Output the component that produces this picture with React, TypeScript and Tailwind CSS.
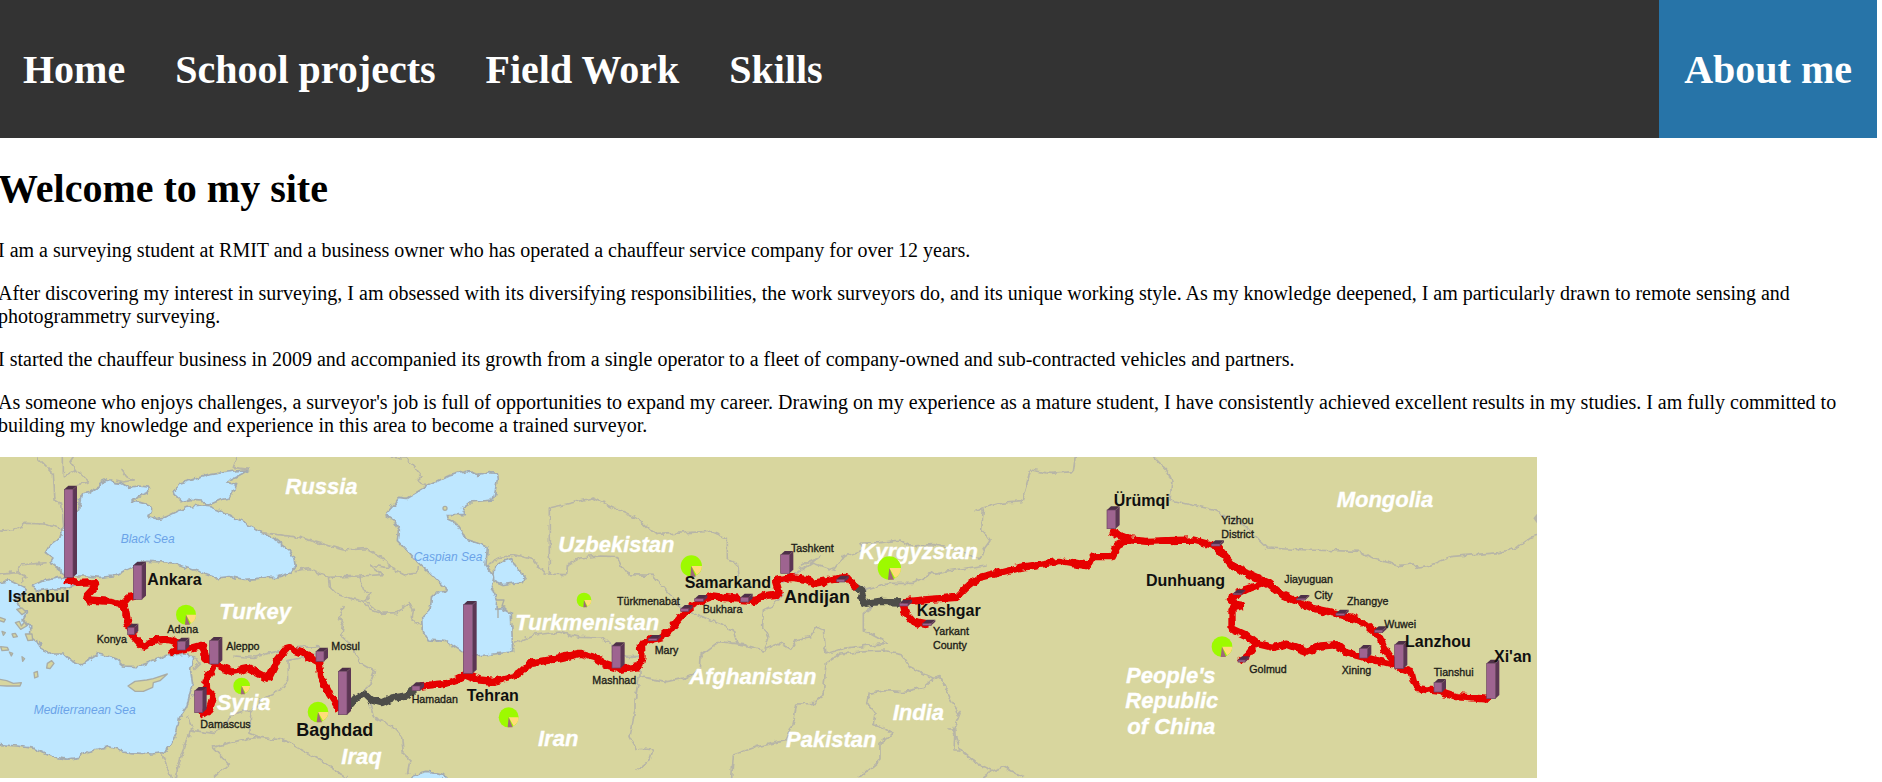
import React from "react";

type Point = [number, number];

const navLinks = ["Home", "School projects", "Field Work", "Skills"];

const paragraphs = [
  "I am a surveying student at RMIT and a business owner who has operated a chauffeur service company for over 12 years.",
  "After discovering my interest in surveying, I am obsessed with its diversifying responsibilities, the work surveyors do, and its unique working style. As my knowledge deepened, I am particularly drawn to remote sensing and photogrammetry surveying.",
  "I started the chauffeur business in 2009 and accompanied its growth from a single operator to a fleet of company-owned and sub-contracted vehicles and partners.",
  "As someone who enjoys challenges, a surveyor's job is full of opportunities to expand my career. Drawing on my experience as a mature student, I have consistently achieved excellent results in my studies. I am fully committed to building my knowledge and experience in this area to become a trained surveyor.",
];

const seas = [
  // Black Sea
  "M244 132L268 128 292 112 300 100 322 90 345 98 365 100 385 112 415 108 452 112 440 128 412 140 398 154 425 158 450 165 455 180 446 200 470 206 500 200 530 185 560 172 600 168 630 170 655 180 690 198 740 222 790 248 830 270 868 300 882 325 886 350 870 370 830 382 800 382 770 386 730 388 690 380 650 384 610 370 575 358 540 345 500 336 440 334 400 348 370 362 340 378 300 382 262 378 228 378 200 375 190 368 152 338 160 325 136 308 150 284 180 262 190 230 236 180Z",
  // Sea of Azov
  "M522 122L540 100 580 88 630 74 680 66 748 58 725 72 680 96 710 104 705 115 690 145 660 150 620 168 608 150 575 148 545 154 528 138Z",
  // Marmara
  "M94 408L130 392 180 382 225 392 226 408 196 416 140 418 118 422Z",
  // Aegean and Mediterranean
  "M-10 400L30 392 50 402 80 418 58 440 42 452 60 470 80 485 66 510 92 530 92 560 120 580 128 600 158 612 190 612 212 632 240 645 270 628 296 612 345 625 370 648 412 650 440 640 480 624 500 612 520 618 556 612 582 622 572 660 578 700 570 730 560 770 540 800 528 850 510 890 490 908 452 912 390 908 360 900 330 890 290 898 262 905 235 922 200 928 150 918 100 895 52 888 0 884 -10 884Z",
  // Caspian Sea
  "M1155 195L1185 160 1198 142 1220 145 1282 108 1340 80 1395 64 1435 76 1468 68 1490 70 1492 90 1480 150 1410 156 1385 175 1396 194 1342 194 1345 210 1372 222 1384 240 1398 268 1430 278 1462 292 1458 345 1482 378 1474 410 1490 450 1488 478 1510 476 1534 490 1538 606 1480 612 1430 618 1390 608 1340 575 1285 570 1270 545 1268 500 1290 480 1295 440 1310 426 1346 424 1320 400 1290 370 1245 330 1195 275 1198 240 1180 210Z",
  // Garabogazkol
  "M1484 350L1505 335 1535 326 1545 348 1560 366 1576 382 1570 395 1535 400 1510 404 1485 394 1482 375Z",
  // Persian Gulf
  "M1234 990L1240 975 1280 964 1310 968 1335 975 1342 990Z",
];

const islands = [
  "M384 708L405 694 440 690 460 686 502 672 480 692 460 698 458 712 430 724 405 724Z",
  "M-10 686L20 692 40 700 64 698 60 708 20 708 -10 706Z",
  "M142 640L155 632 162 640 150 656 140 654Z",
  "M50 478L66 474 78 486 66 494Z",
  "M102 668L112 664 114 680 104 684Z",
  "M46 518L58 514 64 528 74 516 80 528 62 538Z",
  "M76 552L96 552 98 570 84 572Z",
  "M2 590L22 592 26 600 6 602Z",
  "M36 552L46 550 52 560 40 562Z",
  "M28 606L38 610 34 618Z",
  "M66 620L74 626 68 634Z",
  "M-8 500L16 508 12 516 -8 510Z",
  "M6 544L16 548 10 556Z",
];

const borders = [
  "M110 20L160 70 165 150 185 162 192 240M190 20L190 80 230 60 268 96 232 104",
  "M-10 244L40 240 80 220 130 222 184 236M230 60L210 35 220 20M-10 372L50 365 60 345 140 338M50 365L78 382 66 402",
  "M345 90L370 96 400 90 380 80 365 60M748 58L700 52 712 20",
  "M790 248L850 256 900 262 960 280 1030 300 1100 296 1160 330 1170 352 1215 374 1250 370 1252 345",
  "M884 362L930 356 960 372 985 382 1080 378 1148 374 1110 345 1160 352 1170 352",
  "M985 382L988 410 1010 432 1060 450 1090 456 1110 480 1140 490 1190 488 1230 460 1240 480 1236 510 1264 526",
  "M1080 378L1090 420 1110 430 1095 450 1116 470 1144 490",
  "M1030 468L1018 500 1030 530 1025 560 1060 590 1080 640 1124 664 1110 700 1090 720 1110 760 1120 800 1180 830 1205 860 1210 910 1230 930 1222 970",
  "M960 590L900 592 840 602 760 622 700 618M586 622L600 640 580 660",
  "M960 612L864 632 866 690 850 715 800 740 752 782 750 850 780 862",
  "M780 862L740 866 636 892 685 942 640 984M780 862L860 872 960 930 1040 984",
  "M484 908L516 984M526 984L545 910 570 840 640 850 680 820 700 790 750 780",
  "M575 740L600 720M560 800L575 830 568 860M1172 22L1220 24 1266 78 1250 92 1280 106",
  "M1648 370L1648 174 1780 144 1920 212 1964 254 2060 248 2130 244 2182 266 2182 330 2212 340 2218 378",
  "M1464 345L1500 322 1550 315 1600 330 1635 372 1700 374 1702 346 1740 324 1800 318 1850 320 1865 350 1885 374 1960 376 2040 470 2130 510 2200 540 2210 580",
  "M1540 582L1600 555 1680 546 1740 562 1810 564 1832 584 1850 618 1920 620 1920 680 2000 695 2070 680 2098 660 2100 620 2160 575 2230 584 2290 600 2340 580 2370 598 2390 570 2430 560 2450 530 2470 540 2478 612",
  "M2290 600L2305 565 2288 528 2290 480 2320 465 2350 430",
  "M1918 680L1905 750 1905 780 1890 860 1912 900M1918 895L1960 900 1950 930 1910 960",
  "M2478 612L2530 595 2600 586 2662 580 2590 540 2590 490 2630 460",
  "M2478 640L2520 612 2600 605 2660 603 2700 610 2730 650 2800 685 2820 680 2840 720 2860 760 2880 790 2860 840 2880 900",
  "M2478 640L2470 730 2450 760 2390 762 2380 820 2358 872 2270 890 2200 915 2195 984",
  "M2800 685L2770 712 2710 725 2660 722 2605 730 2600 760 2625 790 2620 820 2680 850 2640 880 2640 930 2575 984",
  "M2845 840L2865 840 2862 900 2880 900 2930 940 2980 962 3010 950 3070 980M2980 962L2950 984",
  "M2345 402L2390 370 2460 320 2400 348 2404 362 2440 340 2500 360 2530 320 2590 300 2580 280 2640 278 2700 270 2730 288 2800 284 2870 300 2940 330 2950 300 2970 272 2945 240 2950 180 2925 180 3000 160 3065 155 3092 60 3150 70 3220 65 3226 20",
  "M2470 400L2530 380 2600 420 2670 400 2740 400 2800 370 2830 365 2960 345",
  "M3460 20L3500 60 3516 95 3510 150 3640 180 3680 200 3720 215 3800 294 3920 300 4080 304 4110 324 4200 346 4240 342 4254 354 4280 350 4350 320 4500 308 4550 294 4590 262 4620 255",
];

const routes = [
  "M196 388L235 400 288 398 282 414 260 438 265 450 330 454 370 462 388 442 410 438M372 462L384 520 402 560 430 590 470 570 500 568 528 574 538 594 510 608 560 598 610 584 616 622 642 642 700 664 745 655 805 686 832 632 862 592 910 610 958 638 962 680 990 735 1020 780",
  "M640 650L618 694 620 720 640 740 628 780 600 796",
  "M1260 708L1340 700 1370 690 1400 674 1440 690 1480 694 1540 680 1560 668 1590 640 1660 628 1740 610 1790 624 1820 644 1860 658 1918 650 1926 620 1924 580 1960 568 1986 560 2010 540 2060 480 2100 452 2140 438 2220 448 2260 452 2300 436 2338 432 2326 392 2370 382 2420 388 2440 400 2500 388 2540 382 2570 416",
  "M2710 460L2716 490 2740 516 2790 526M2710 456L2790 448 2870 442 2900 412 2940 382 3060 352 3180 334 3260 348 3280 320 3336 320 3352 288 3388 268 3332 244",
  "M3372 268L3440 274 3500 272 3580 270 3648 288 3676 322 3700 350 3740 370 3805 400 3850 436 3900 458 3940 475 4010 490 4060 506 4100 524 4136 556 4150 590 4176 628 4204 656 4234 668 4240 692 4256 716 4320 724 4370 740 4470 748",
  "M3790 400L3740 418 3710 434 3688 442 3706 462 3730 466 3696 474 3696 536 3740 556 3770 580 3820 592 3860 582 3920 604 3962 588 4012 584 4040 608 4100 624 4160 640 4200 650M3770 580L3746 612 3718 636",
];

const disputedRoutes = [
  "M1040 776L1068 744 1094 730 1114 750 1145 758 1176 744 1222 738 1242 716",
  "M2560 408L2590 426 2584 444 2596 460 2640 454 2700 456",
];

const pies: { at: Point; r: number }[] = [
  { at: [558, 494], r: 30 },
  { at: [725, 708], r: 25 },
  { at: [954, 786], r: 31 },
  { at: [1526, 802], r: 30 },
  { at: [1752, 450], r: 22 },
  { at: [2074, 348], r: 32 },
  { at: [2668, 354], r: 35 },
  { at: [3666, 590], r: 31 },
];

// Front-face left and bottom, then width and height of each column.
const columns: [number, number, number, number][] = [
  [193, 382, 26, 264], [400, 448, 26, 102], [383, 554, 20, 22], [532, 600, 24, 26],
  [629, 642, 26, 70], [584, 788, 24, 66], [948, 634, 24, 30], [1015, 794, 26, 130],
  [1236, 722, 24, 14], [1390, 670, 28, 206], [1836, 654, 26, 66], [1945, 572, 26, 6],
  [2042, 484, 24, 8], [2084, 454, 26, 8], [2222, 456, 24, 14], [2342, 370, 26, 56],
  [2510, 396, 24, 8], [2698, 468, 26, 8], [2768, 526, 26, 6], [3321, 236, 26, 56],
  [3634, 288, 26, 6], [3700, 434, 24, 4], [3714, 636, 22, 6], [3890, 450, 26, 4],
  [4008, 496, 26, 6], [4124, 548, 24, 8], [4078, 624, 24, 28], [4184, 656, 26, 72],
  [4302, 726, 24, 28], [4460, 746, 26, 106],
];

interface LabelProps {
  x: number;
  y: number;
  children: React.ReactNode;
}

function Country({ x, y, children }: LabelProps) {
  return <text x={x} y={y} className="fill-white stroke-white stroke-1 text-[66px] font-bold italic">{children}</text>;
}

function Sea({ x, y, children }: LabelProps) {
  return <text x={x} y={y} className="fill-[#6ba3e8] text-[36px] italic">{children}</text>;
}

function City({ x, y, large, children }: LabelProps & { large?: boolean }) {
  return (
    <text x={x} y={y} className={large ? "fill-[#101010] text-[54px] font-bold" : "fill-[#101010] text-[48px] font-bold"}>
      {children}
    </text>
  );
}

function Town({ x, y, children }: LabelProps) {
  return <text x={x} y={y} className="fill-[#1c1c18] stroke-[#1c1c18] stroke-1 text-[32px]">{children}</text>;
}

function Column({ box: [x, y, w, h] }: { box: [number, number, number, number] }) {
  const top = y - h;
  return (
    <g>
      <path d={`M${x} ${top}l12 -11h${w}l-12 11z`} fill="#4d2f48" />
      <path d={`M${x + w} ${top}l12 -11v${h}l-12 11z`} fill="#5c3654" />
      <rect x={x} y={top} width={w} height={h} fill="#9e6490" stroke="#6a4262" strokeWidth="2" />
    </g>
  );
}

function Pie({ at: [x, y], r }: { at: Point; r: number }) {
  const low = Math.round(r * 0.85);
  return (
    <g>
      <circle cx={x} cy={y} r={r} fill="#9dfa00" />
      <path d={`M${x} ${y}h${r}a${r} ${r} 0 0 1 ${-Math.round(r * 0.5)} ${low}z`} fill="#ffdc78" />
      <path d={`M${x} ${y}l${Math.round(r * 0.4)} ${r}h${-Math.round(r * 0.5)}z`} fill="#a06a78" />
    </g>
  );
}

function RouteMap() {
  return (
    <svg
      viewBox="-6 21 4617 963"
      role="img"
      aria-label="Silk Road route map"
      className="block h-auto w-[1539px] max-w-full font-['Liberation_Sans',Arial,sans-serif]"
    >
      <defs>
        <filter id="rough-line" filterUnits="userSpaceOnUse" x="-6" y="21" width="4617" height="963">
          <feTurbulence type="fractalNoise" baseFrequency="0.05" numOctaves="2" seed="4" />
          <feDisplacementMap in="SourceGraphic" scale="18" xChannelSelector="R" yChannelSelector="G" />
        </filter>
      </defs>
      <rect x="-6" y="21" width="4617" height="963" fill="#d8d69e" />
      <g fill="#bee7ff" stroke="#a3abb0" strokeWidth="5" strokeLinejoin="round" filter="url(#rough-line)">
        {seas.map((d) => <path key={d} d={d} />)}
      </g>
      <g fill="#d8d69e" stroke="#a9aca5" strokeWidth="4" strokeLinejoin="round">
        {islands.map((d) => <path key={d} d={d} />)}
        <circle cx="1335" cy="175" r="6" />
        <path d="M1488 450h24l-6 18h10M1494 480v24" fill="none" />
      </g>
      <g fill="none" stroke="#b7b5a7" strokeWidth="5" strokeLinejoin="round" filter="url(#rough-line)">
        {borders.map((d) => <path key={d} d={d} />)}
      </g>
      <path d="M4620 180L4600 205 4620 232Z" fill="#b7b5a7" />

      <Country x={856} y={132}>Russia</Country>
      <Country x={658} y={508}>Turkey</Country>
      <Country x={650} y={780}>Syria</Country>
      <Country x={1024} y={942}>Iraq</Country>
      <Country x={1614} y={889}>Iran</Country>
      <Country x={1675} y={305}>Uzbekistan</Country>
      <Country x={1546} y={541}>Turkmenistan</Country>
      <Country x={2068} y={703}>Afghanistan</Country>
      <Country x={2358} y={892}>Pakistan</Country>
      <Country x={2678} y={811}>India</Country>
      <Country x={2578} y={326}>Kyrgyzstan</Country>
      <Country x={4010} y={170}>Mongolia</Country>
      <Country x={3378} y={698}>People's</Country>
      <Country x={3376} y={774}>Republic</Country>
      <Country x={3382} y={852}>of China</Country>

      <Sea x={362} y={279}>Black Sea</Sea>
      <Sea x={101} y={792}>Mediterranean Sea</Sea>
      <Sea x={1241} y={332}>Caspian Sea</Sea>

      {pies.map((pie) => <Pie key={pie.at.join()} {...pie} />)}

      <g fill="none" strokeWidth="22" strokeLinejoin="bevel" filter="url(#rough-line)">
        <g stroke="#4d4d4a">{disputedRoutes.map((d) => <path key={d} d={d} />)}</g>
        <g stroke="#e60500">{routes.map((d) => <path key={d} d={d} />)}</g>
      </g>
      {columns.map((box) => <Column key={box.join()} box={box} />)}

      <City x={24} y={456}>Istanbul</City>
      <City x={442} y={406}>Ankara</City>
      <City x={889} y={859} large>Baghdad</City>
      <City x={1400} y={752}>Tehran</City>
      <City x={2054} y={414}>Samarkand</City>
      <City x={2352} y={458} large>Andijan</City>
      <City x={2750} y={497}>Kashgar</City>
      <City x={3341} y={167}>Ürümqi</City>
      <City x={3438} y={407}>Dunhuang</City>
      <City x={4215} y={590}>Lanzhou</City>
      <City x={4482} y={635}>Xi'an</City>

      <Town x={290} y={579}>Konya</Town>
      <Town x={502} y={549}>Adana</Town>
      <Town x={679} y={601}>Aleppo</Town>
      <Town x={601} y={833}>Damascus</Town>
      <Town x={994} y={600}>Mosul</Town>
      <Town x={1235} y={758}>Hamadan</Town>
      <Town x={1777} y={702}>Mashhad</Town>
      <Town x={1851} y={466}>Türkmenabat</Town>
      <Town x={1964} y={612}>Mary</Town>
      <Town x={2108} y={488}>Bukhara</Town>
      <Town x={2373} y={305}>Tashkent</Town>
      <Town x={2799} y={556}>Yarkant</Town>
      <Town x={2799} y={597}>County</Town>
      <Town x={3664} y={223}>Yizhou</Town>
      <Town x={3664} y={264}>District</Town>
      <Town x={3853} y={399}>Jiayuguan</Town>
      <Town x={3943} y={447}>City</Town>
      <Town x={4041} y={466}>Zhangye</Town>
      <Town x={4153} y={533}>Wuwei</Town>
      <Town x={3748} y={669}>Golmud</Town>
      <Town x={4025} y={672}>Xining</Town>
      <Town x={4301} y={679}>Tianshui</Town>
    </svg>
  );
}

export default function App() {
  return (
    <div className="-ml-0.5 mr-[5px] bg-white font-['Liberation_Serif','Times_New_Roman',serif] text-black">
      <nav className="flex flex-wrap bg-[#333333] text-[40px] leading-[46px] font-bold text-white">
        {navLinks.map((label) => (
          <a key={label} href="#" className="px-[25px] pt-[47px] pb-[45px]">{label}</a>
        ))}
        <a href="#" aria-current="page" className="ml-auto bg-[#2774a8] px-[25px] pt-[47px] pb-[45px]">About me</a>
      </nav>
      <main>
        <h1 className="mt-7 mb-[27px] text-[40px] leading-[46px] font-bold">Welcome to my site</h1>
        {paragraphs.map((text) => (
          <p key={text} className="my-5 text-[20px] leading-[23px]">{text}</p>
        ))}
        <RouteMap />
      </main>
    </div>
  );
}
